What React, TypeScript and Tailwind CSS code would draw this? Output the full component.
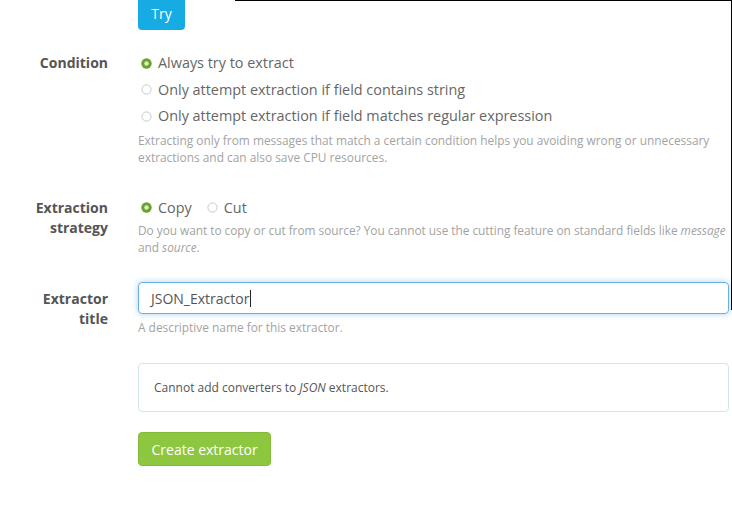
import React from 'react'

const font = { fontFamily: '"Open Sans", "Liberation Sans", sans-serif' }

const Radio: React.FC<{ checked?: boolean; label: string }> = ({ checked, label }) => (
  <label className="flex items-center gap-[6px] text-[14.4px] text-[#666] h-[26.5px]">
    <svg width="11" height="11" viewBox="0 0 11 11" className="shrink-0 ml-[3px]">
      {checked ? (
        <>
          <circle cx="5.5" cy="5.5" r="5.2" fill="#6ca12e" />
          <circle cx="5.5" cy="5.5" r="2.2" fill="#dcefc4" />
        </>
      ) : (
        <circle cx="5.5" cy="5.5" r="4.6" fill="#fff" stroke="#c8c8c8" strokeWidth="1" />
      )}
    </svg>
    <span>{label}</span>
  </label>
)

const Row: React.FC<{ label: React.ReactNode; labelPad?: string; className?: string; children: React.ReactNode }> = ({
  label,
  labelPad = 'pt-[3px]',
  className = '',
  children
}) => (
  <div className={`flex ${className}`}>
    <div className={`w-[123px] shrink-0 pr-[15px] text-right text-[14px] font-bold leading-[20px] text-[#555] ${labelPad}`}>
      {label}
    </div>
    <div className="flex-1 pl-[15px] pr-[3px]">{children}</div>
  </div>
)

const Help: React.FC<{ children: React.ReactNode; className?: string }> = ({ children, className = '' }) => (
  <p className={`-mr-[3px] text-[11.9px] leading-[17px] text-[#a3a3a3] ${className}`}>{children}</p>
)

export default function App() {
  return (
    <div className="relative w-[732px] h-[510px] overflow-hidden bg-white" style={font}>
      {/* window border artefacts */}
      <div className="absolute top-0 left-[235px] right-0 h-px bg-black" />
      <div className="absolute top-0 right-0 w-px h-[310px] bg-black" />

      <div className="flex">
        <div className="w-[138px] shrink-0" />
        <button className="-mt-[3px] h-[33px] w-[47px] rounded-[4px] bg-[#16ace3] text-[14px] text-white">
          Try
        </button>
      </div>

      <Row label="Condition" className="mt-[20px]">
        <Radio checked label="Always try to extract" />
        <Radio label="Only attempt extraction if field contains string" />
        <Radio label="Only attempt extraction if field matches regular expression" />
        <Help className="mt-[2px]">
          Extracting only from messages that match a certain condition helps you avoiding wrong or unnecessary
          extractions and can also save CPU resources.
        </Help>
      </Row>

      <Row label={<>Extraction<br />strategy</>} className="mt-[29px]">
        <div className="flex gap-[12px]">
          <Radio checked label="Copy" />
          <Radio label="Cut" />
        </div>
        <Help className="mt-[1px] whitespace-nowrap tracking-[-0.045px]">
          Do you want to copy or cut from source? You cannot use the cutting feature on standard fields like{' '}
          <em>message</em>
          <br />
          and <em>source</em>.
        </Help>
      </Row>

      <Row label={<>Extractor<br />title</>} labelPad="pt-[7px]" className="mt-[26px]">
        <div className="flex h-[32px] items-center rounded-[4px] border border-[#66afe9] px-[12px] text-[14px] text-[#555] shadow-[0_0_6px_rgba(102,175,233,0.55)]">
          <span>JSON_Extractor</span>
          <span className="ml-px h-[17px] w-px bg-[#222]" />
        </div>
        <Help className="mt-[5px]">A descriptive name for this extractor.</Help>
      </Row>

      <div className="flex mt-[27px]">
        <div className="w-[138px] shrink-0" />
        <div className="flex-1 pr-[3px]">
          <div className="flex h-[49px] items-center rounded-[4px] border border-[#d4e6ec] px-[15px] text-[12px] text-[#555]">
            Cannot add converters to&nbsp;<em>JSON</em>&nbsp;extractors.
          </div>
          <button className="mt-[20px] h-[34px] rounded-[4px] border border-[#84ba3a] bg-[#8dc63f] px-[12.5px] text-[14px] text-white">
            Create extractor
          </button>
        </div>
      </div>
    </div>
  )
}
